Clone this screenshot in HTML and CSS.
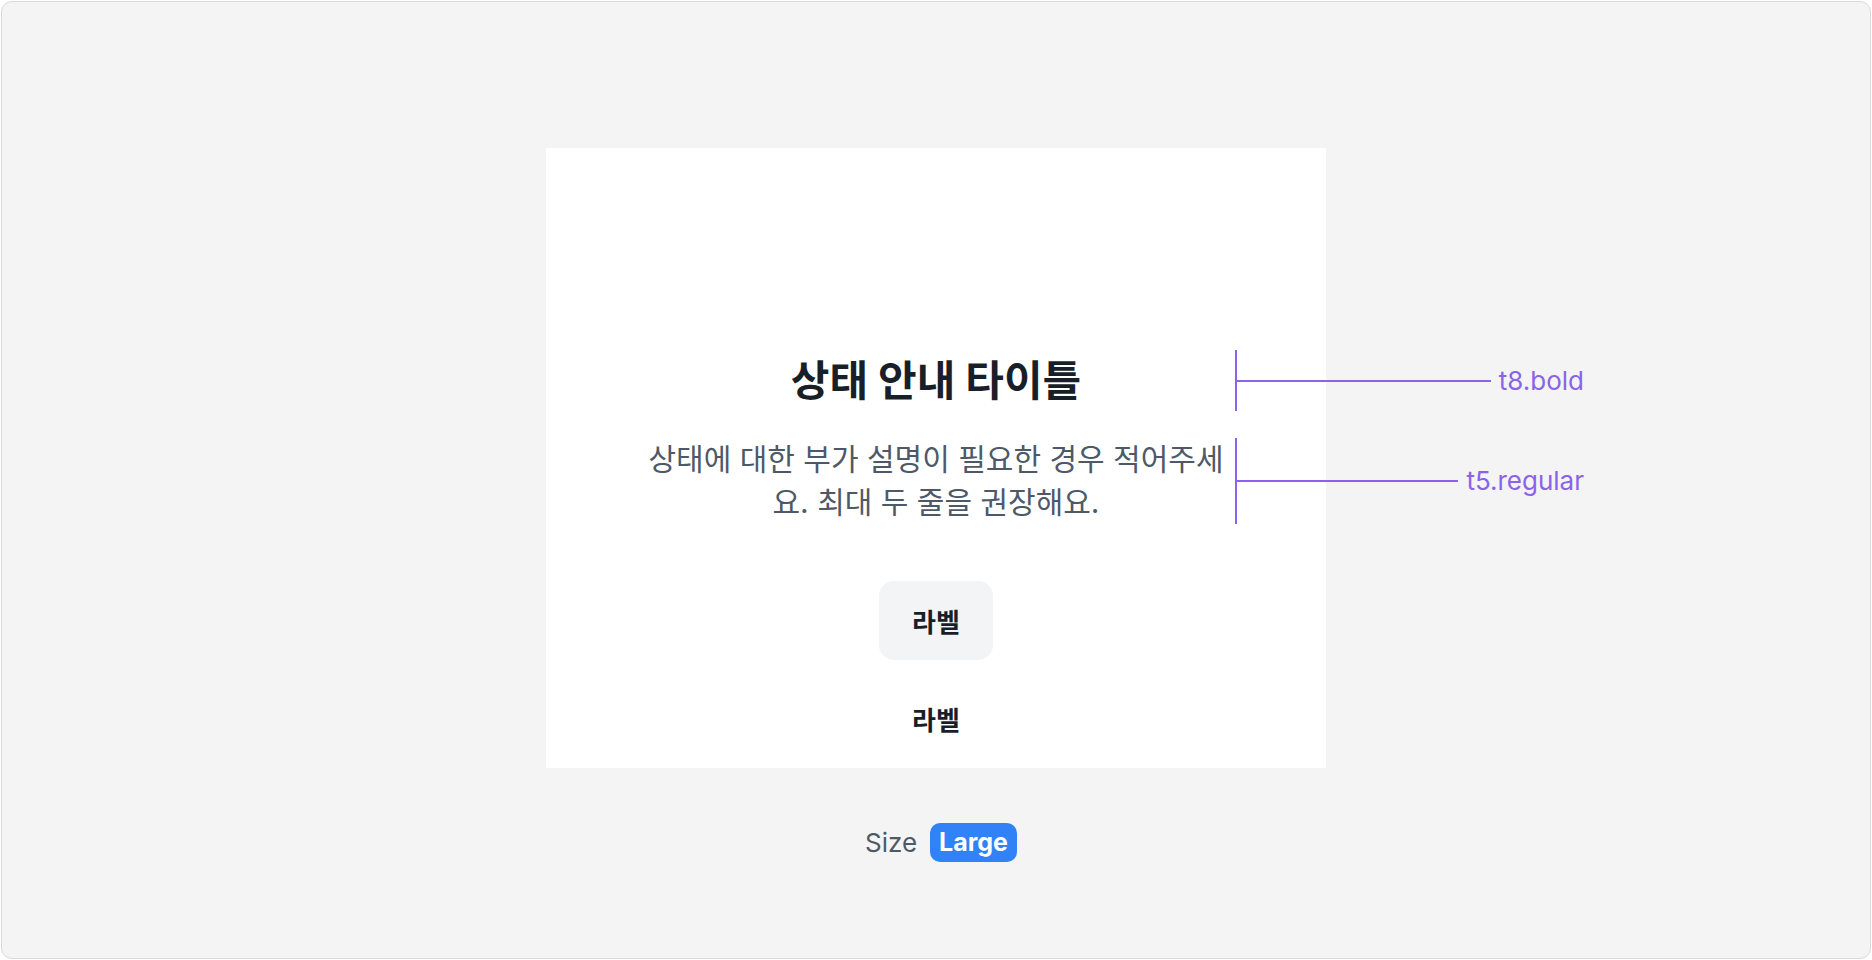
FILE: index.html
```html
<!DOCTYPE html>
<html>
	<head>
		<meta charset="utf-8">
		<title>Result</title>
		<link rel="stylesheet" href="styles.css">
	</head>
	<body>
		<div class="frame">
			<div class="card">
				<div class="block block-title">
					<h2 class="title">상태 안내 타이틀</h2>
					<div class="anno">
						<span class="anno-line"></span>
						<span class="anno-label">t8.bold</span>
					</div>
				</div>
				<div class="block block-desc">
					<p class="desc">상태에 대한 부가 설명이 필요한 경우 적어주세요. 최대 두 줄을 권장해요.</p>
					<div class="anno">
						<span class="anno-line"></span>
						<span class="anno-label">t5.regular</span>
					</div>
				</div>
				<button class="btn btn-fill">라벨</button>
				<button class="btn btn-text">라벨</button>
			</div>
			<div class="size-row">
				<span class="size-name">Size</span>
				<span class="chip">Large</span>
			</div>
		</div>
	</body>
</html>
```

FILE: styles.css
```css
body, h2, p{
	margin: 0;
	padding: 0;
}
body{
	background: #fff;
	font-family: Inter, "Noto Sans CJK KR", sans-serif;
}
.frame{
	margin: 1px;
	height: 958px;
	box-sizing: border-box;
	border: 1px solid #d9d9d9;
	border-radius: 11px;
	background: #f4f4f4;
	display: flex;
	flex-direction: column;
	align-items: center;
	padding-top: 146px;
}
.card{
	width: 780px;
	box-sizing: border-box;
	padding: 202px 90px 30px;
	background: #fff;
	display: flex;
	flex-direction: column;
	align-items: center;
}
.block{
	position: relative;
	width: 600px;
	text-align: center;
}
.block-desc{
	margin-top: 27px;
}
.title{
	font-size: 42px;
	font-weight: 700;
	line-height: 61px;
	color: #191f28;
}
.desc{
	font-size: 30px;
	line-height: 43px;
	color: #4e5968;
}
/* annotation bracket */
.anno{
	position: absolute;
	left: 100%;
	top: 0;
	bottom: 0;
	width: 347px;
	margin-left: -1px;
	border-left: 2px solid #8b63e8;
	display: flex;
	align-items: center;
}
.anno-line{
	flex: 1;
	height: 2px;
	background: #8b63e8;
}
.anno-label{
	margin-left: 8px;
	font-size: 26px;
	line-height: 1;
	color: #8b63e8;
}
.btn{
	border: none;
	background: none;
	font-family: Inter, "Noto Sans CJK KR", sans-serif;
	font-size: 26px;
	font-weight: 700;
	color: #191f28;
	cursor: pointer;
}
.btn-fill{
	margin-top: 57px;
	height: 79px;
	padding: 0 33px;
	border-radius: 15px;
	background: #f2f4f6;
}
.btn-text{
	margin-top: 44px;
	line-height: 34px;
	padding: 0;
}
.size-row{
	margin-top: 55px;
	padding-left: 10px;
	display: flex;
	align-items: center;
	gap: 13px;
}
.size-name{
	font-size: 26px;
	color: #4e5968;
}
.chip{
	height: 39px;
	padding: 0 9px;
	border-radius: 10px;
	background: #3182f6;
	color: #fff;
	font-size: 25px;
	font-weight: 700;
	line-height: 39px;
}
```
